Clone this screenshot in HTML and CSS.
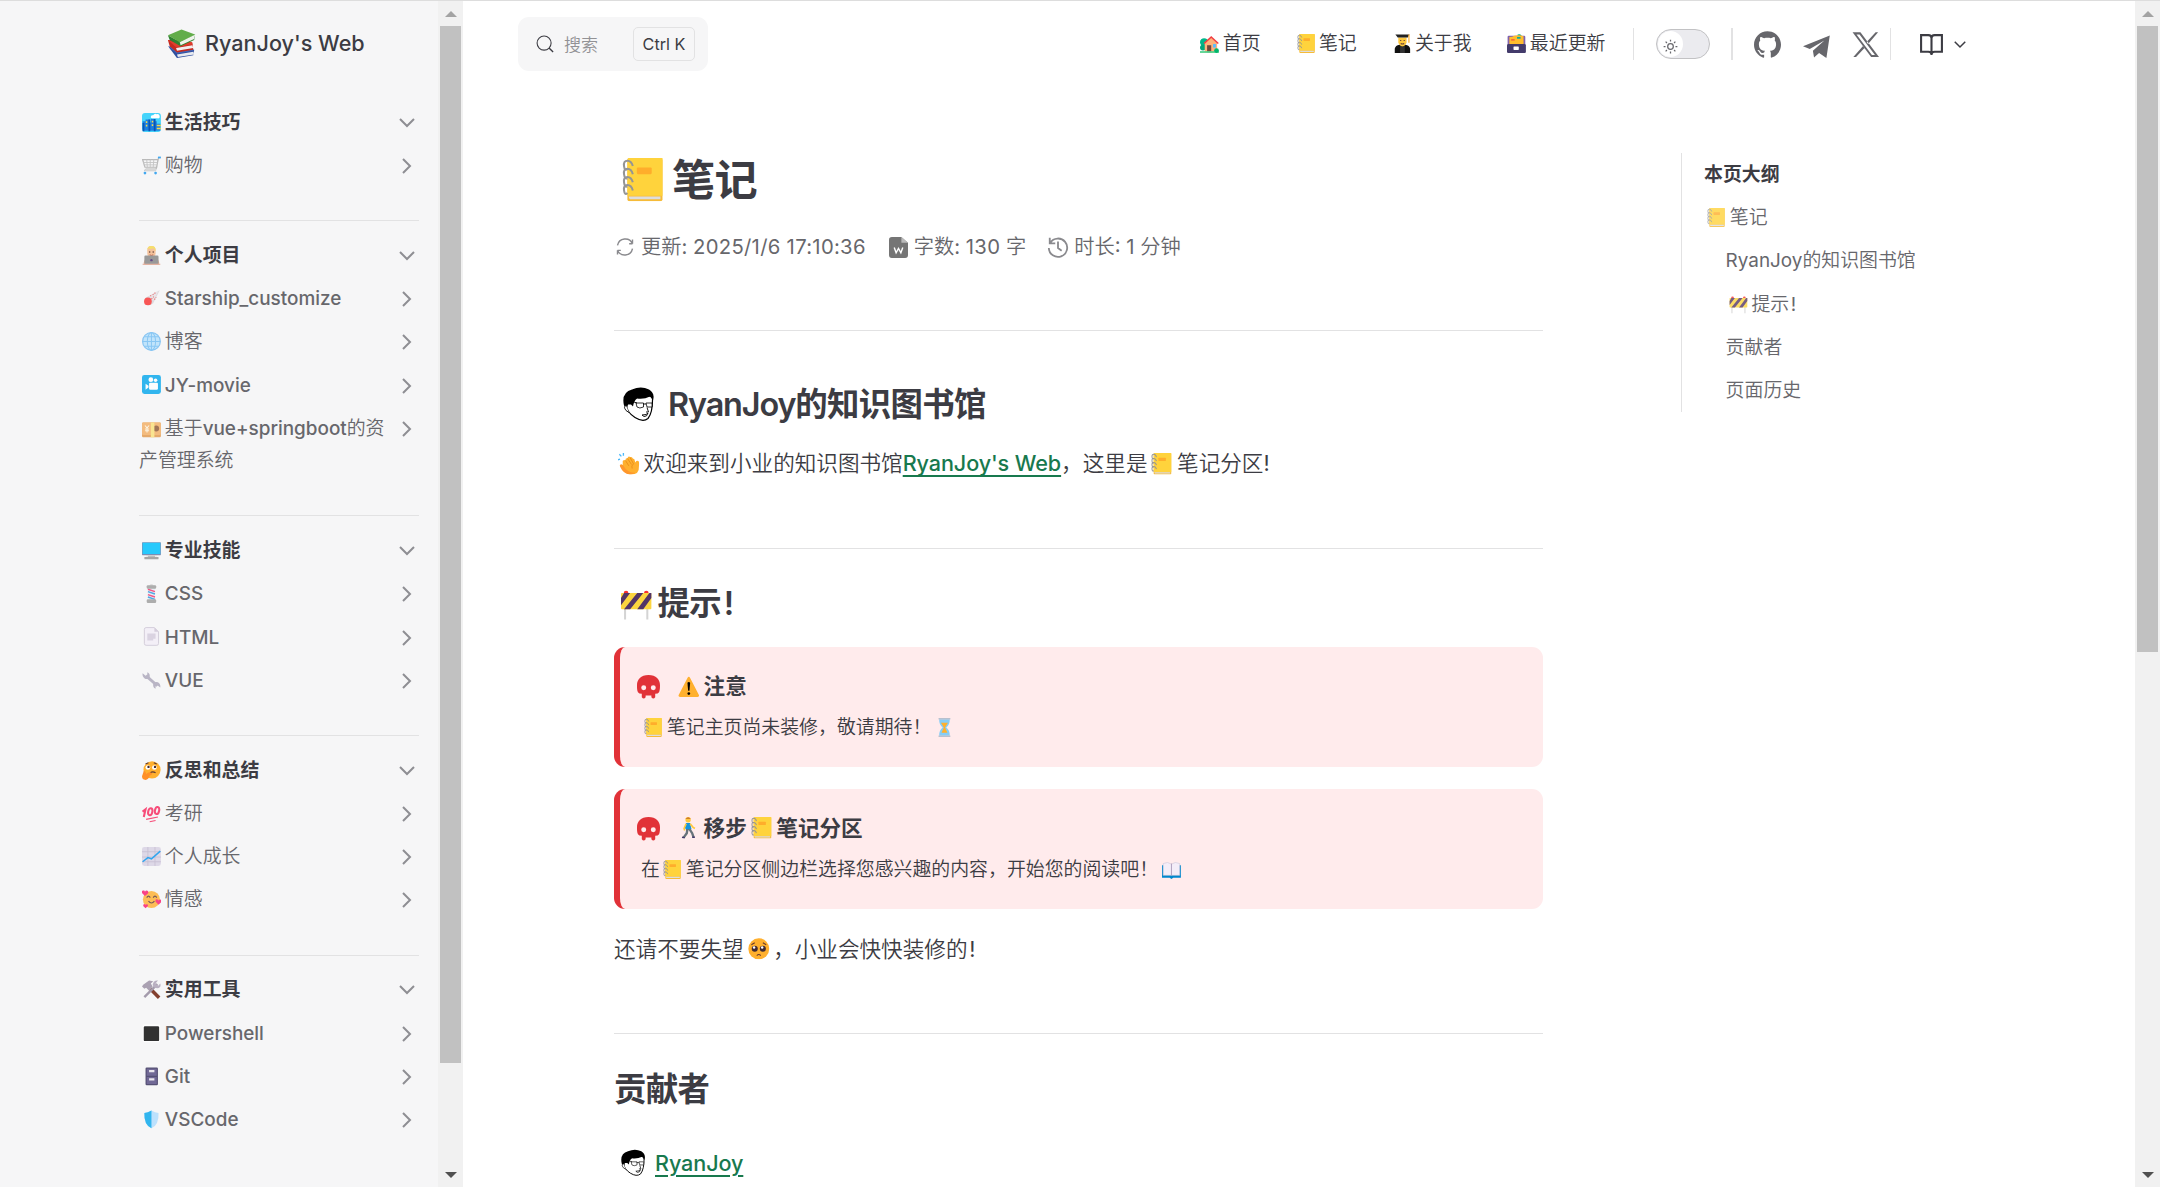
FILE: index.html
```html
<!DOCTYPE html>
<html lang="zh-CN">
<head>
<meta charset="utf-8">
<title>笔记 | RyanJoy's Web</title>
<link rel="stylesheet" href="styles.css">
</head>
<body>
<svg class="sprite" aria-hidden="true">
  <symbol id="books" viewBox="0 0 32 32">
    <path d="M2 20l9 12 18-3 1-6-18-5z" fill="#2f4f9f"/><path d="M11 28l18-3 1 3-18 3z" fill="#e8eaf0"/><path d="M1 19l10 8 19-3-8-3z" fill="#4266b8"/>
    <path d="M1 12l2 7 8 7 18-3-1-8-12-3z" fill="#c52a20"/><path d="M10 21l18-3 1 3-18 3z" fill="#f3eeee"/><path d="M1 12l9 8 18-3-1-3-14 2z" fill="#e03d2d"/>
    <path d="M1 7l13 7 17-8-1 6-15 7L3 12z" fill="#2f8232"/><path d="M14 14l17-8-1 5-15 7z" fill="#eef3ea"/><path d="M1 7L16 .5 31 6l-17 8.500z" fill="#62ad4a"/>
  </symbol>
  <symbol id="city" viewBox="0 0 32 32"><rect width="32" height="32" rx="5" fill="#45d4fb"/><path d="M15 6q1-3 4-2 2-4 6-2 4-1 5 3 1 5-4 4h-9q-3 0-2-3z" fill="#fff"/><path d="M1 14h5v-3h7v5h2v-6h7v4h3v4h6v12H3l-2-3z" fill="#1c7fe0"/><path d="M1 17h3v14H1zM11 11h3v20h-3zM20 10h3v21h-3z" fill="#0a55b5"/><path d="M6.500 14H9v3H6.500zm0 6H9v3H6.500zm10-7H19v3h-2.500zm0 6H19v3h-2.500zM25 20h7v2.500h-7zm0 5h7v2.500h-7z" fill="#f7d84b"/></symbol>
  <symbol id="cart" viewBox="0 0 32 32"><path d="M31 3h-3l-4 19H6M1 6h26l-2 13H5z" fill="none" stroke="#aaa" stroke-width="2"/><path d="M2 11h24M3 15h22M8 6l1 13M14 6v13M20 6l-1 13M6 22l-2 3h20" fill="none" stroke="#b8b8b8" stroke-width="1.500"/><circle cx="5" cy="29" r="2.300" fill="#1695ef"/><circle cx="23" cy="29" r="2.300" fill="#1695ef"/><path d="M27 1h5v3h-5z" fill="#1695ef"/></symbol>
  <symbol id="coder" viewBox="0 0 32 32"><path d="M3 32v-4q1-7 8-8h10q7 1 8 8v4z" fill="#e9ae8d"/><path d="M9 7q0-7 7-7t7 7v6q-1 7-7 7t-7-7z" fill="#f4c29c"/><path d="M9 9q-1-9 7-9t7 9q-2-4-4-5-5 2-8 0-2 2-2 5z" fill="#f5df6c"/><circle cx="13" cy="10" r="1.300" fill="#60403a"/><circle cx="19" cy="10" r="1.300" fill="#60403a"/><path d="M13 15q3 2 6 0" stroke="#b6513f" stroke-width="1.500" fill="none"/><rect x="4" y="16" width="24" height="15" rx="2" fill="#999"/><circle cx="16" cy="24" r="2" fill="#674c86"/><path d="M1 30h30v2H1z" fill="#e3b3a3"/></symbol>
  <symbol id="comet" viewBox="0 0 32 32"><path d="M30 2L6 15q-4 7 1 11 6 4 12-2z" fill="#d8d3d8"/><path d="M28 3L12 12l7 8z" fill="#e7e3e7"/><path d="M14 12l3-2m-1 7l4-4m1 5l3-4m-6-4l5-4" stroke="#e45a5a" stroke-width="2" stroke-dasharray="2 2"/><circle cx="10" cy="21" r="6.500" fill="#f92f2f"/></symbol>
  <symbol id="globe" viewBox="0 0 32 32"><circle cx="16" cy="16" r="15" fill="#b4e0fc" stroke="#6bb8f2" stroke-width="2"/><g fill="none" stroke="#6fbcf3" stroke-width="1.700"><ellipse cx="16" cy="16" rx="7" ry="15"/><path d="M16 1v30M1 16h30M4 8h24M4 24h24"/></g></symbol>
  <symbol id="cinema" viewBox="0 0 32 32"><rect width="32" height="32" rx="4" fill="#00a6ed"/><circle cx="15" cy="8" r="4" fill="#fff"/><circle cx="23" cy="9" r="3" fill="#fff"/><rect x="12" y="13" width="15" height="12" rx="2" fill="#fff"/><path d="M6 15l5 3v3l-5 4z" fill="#fff"/></symbol>
  <symbol id="yen" viewBox="0 0 32 32"><rect x="0" y="6" width="32" height="25" rx="2" fill="#e19747"/><rect y="6" width="32" height="21" rx="2" fill="#f3ad61"/><circle cx="24" cy="16" r="5" fill="#8c542e"/><path d="M15 6h6v25h-6z" fill="#fae077"/><path d="M5 11l3.500 4 3.500-4M8.500 15v8M5 17h7M5 20h7" stroke="#fff3da" stroke-width="1.800" fill="none"/></symbol>
  <symbol id="desktop" viewBox="0 0 32 32"><path d="M10 23h12v4H10z" fill="#aaa"/><rect width="32" height="22" y="2" rx="1" fill="#7b8eb5"/><rect x="1" y="3" width="30" height="19" fill="#26c9fc"/><rect x="4" y="27" width="24" height="4" rx="1" fill="#a5a5a5"/><path d="M7 24h18v2H7z" fill="#d6d6d6"/></symbol>
  <symbol id="barber" viewBox="0 0 32 32"><path d="M12 3q4-5 8 0z" fill="#ccc"/><rect x="10" y="6" width="12" height="20" fill="#e6edf5"/><path d="M10 9l12 4M10 18l12 4" stroke="#f0326b" stroke-width="2.500"/><path d="M10 13l12 4M10 22l12 4" stroke="#2795df" stroke-width="2.500"/><rect x="8" y="2" width="16" height="6" rx="2" fill="#9b9b9b"/><rect x="8" y="26" width="16" height="6" rx="2" fill="#9b9b9b"/></symbol>
  <symbol id="page" viewBox="0 0 32 32"><path d="M7 1h14l7 7v20q0 3-3 3H7q-3 0-3-3V4q0-3 3-3z" fill="#f3eef8" stroke="#c7bfd0" stroke-width="1.500"/><path d="M21 1v7h7z" fill="#cdc4d6"/><path d="M9 11h14v9h-4v3H9z" fill="#d4cbdc"/></symbol>
  <symbol id="wrench" viewBox="0 0 32 32"><path d="M8 9l18 16" stroke="#aaa5b9" stroke-width="5"/><path d="M1 4l5 4 3-2V2q5 2 4 8-3 5-8 3-5-3-4-9zM31 28l-5-4-3 2v4q-5-2-4-8 3-5 8-3 5 3 4 9z" fill="#aaa5b9"/></symbol>
  <symbol id="thinking" viewBox="0 0 32 32"><circle cx="17" cy="15" r="14.500" fill="#ffb02e"/><circle cx="10" cy="11" r="4" fill="#fff"/><circle cx="21" cy="11" r="4" fill="#fff"/><circle cx="11" cy="10" r="2" fill="#402a32"/><circle cx="22" cy="10" r="2" fill="#402a32"/><path d="M6 5l5-2m9 0l5 2M14 20q4-3 9 0" stroke="#5e3a32" stroke-width="2" fill="none"/><path d="M3 17q3-1 4 5 5-5 9-2 4 2-3 5-2 7-7 7-6 0-6-6z" fill="#ff9027"/></symbol>
  <symbol id="hundred" viewBox="0 0 32 32"><g fill="none" stroke="#f8245b" stroke-width="3.500"><path d="M1 13l5-4-3 13"/><ellipse cx="14" cy="13" rx="3.500" ry="6" transform="rotate(12 14 13)"/><ellipse cx="25.500" cy="11" rx="3.500" ry="6" transform="rotate(12 25.500 11)"/><path d="M7 26l20-4M13 30l10-2" stroke-width="2"/></g></symbol>
  <symbol id="chart" viewBox="0 0 32 32"><rect width="32" height="32" rx="4" fill="#d8d1e4"/><path d="M0 8h32M0 17h32M0 25h32M10 0v32M22 0v32" stroke="#bcb3cb" stroke-width="1.500"/><path d="M1 25l9-7 6 2L31 7" stroke="#0092ed" stroke-width="2.500" fill="none"/></symbol>
  <symbol id="love" viewBox="0 0 32 32"><circle cx="16" cy="16" r="14.500" fill="#ffb02e"/><path d="M8 13q3-5 6 0m5 0q3-5 6 0M11 19q5 6 10 0" fill="none" stroke="#523037" stroke-width="2"/><path d="M5 10L0 5q-1-5 3-4 2 0 2 2 1-2 3-2 4 1 2 5z" fill="#fa176c"/><path d="M28 25l-5-5q-1-5 3-4 2 0 2 2 1-2 3-2 3 1 1 5zM6 31l-4-4q0-4 3-3l1 1 2-1q3 0 2 3z" fill="#fa176c"/></symbol>
  <symbol id="tools" viewBox="0 0 32 32"><path d="M14 15l15 15" stroke="#83402f" stroke-width="6"/><path d="M4 29L26 7" stroke="#a49bac" stroke-width="4"/><path d="M20 3q4-3 7-2l-4 5 4 4 4-4q2 7-5 8-6 0-8-6z" fill="#b9b0c1"/><path d="M2 8l10-7 7 1-4 4 3 5-6 7-5-5-3 2-4-4z" fill="#aaa1b2"/></symbol>
  <symbol id="black" viewBox="0 0 32 32"><rect x="1" y="1" width="30" height="30" rx="2" fill="#fff"/><rect x="3" y="4" width="26" height="25" rx="2" fill="#000"/></symbol>
  <symbol id="cabinet" viewBox="0 0 32 32"><rect x="6" y="1" width="21" height="30" rx="2" fill="#2f2855"/><path d="M8 3h17v12H8zm0 14h17v12H8z" fill="#51477f"/><path d="M12 5h9v4h-9zm0 14h9v4h-9z" fill="#e8e4ec"/></symbol>
  <symbol id="shield" viewBox="0 0 32 32"><path d="M16 1q6 4 12 4 1 20-12 26Q3 25 4 5q6 0 12-4" fill="#aedcff"/><path d="M16 1v30Q3 25 4 5q6 0 12-4" fill="#00a6ed"/></symbol>
  <symbol id="house" viewBox="0 0 32 32"><circle cx="7" cy="14" r="7" fill="#00b68a"/><circle cx="5" cy="23" r="5" fill="#00a77c"/><path d="M8 15l11-10 10 10v16H8z" fill="#ffb37b"/><path d="M7 16L19 5l12 11" fill="none" stroke="#f13d42" stroke-width="2.600"/><path d="M12 19h7v12h-7z" fill="#70483d"/><path d="M22 17h5v6h-5z" fill="#59bdff"/><path d="M0 29h32v3H0z" fill="#52d18b"/><circle cx="28" cy="28" r="4" fill="#00b66d"/></symbol>
  <symbol id="note" viewBox="0 0 32 32"><rect x="4" y="0" width="26" height="32" rx="1.500" fill="#f6bb38"/><path d="M5.500 0H30v28H4V1.500Q4 0 5.500 0z" fill="#ffd33c"/><path d="M5 28.500h23.500v2H6q-1-.5-1-2z" fill="#ddd"/><rect x="11" y="7" width="11" height="5" rx=".8" fill="#ffad2b"/><path d="M8 6Q7 2 4 2T1.500 6 4 8M8 12Q7 8 4 8t-2.500 4T4 15M8 18q-1-4-4-4t-2.500 4T4 21M8 24q-1-4-4-4t-2.500 4T4 26" fill="none" stroke="#959595" stroke-width="1.500"/></symbol>
  <symbol id="grad" viewBox="0 0 32 32"><path d="M3 32v-7q1-6 8-7h10q7 1 8 7v7z" fill="#111"/><path d="M12 32V19l4 3 4-3v13z" fill="#333"/><path d="M9 6h14v8q-1 6-7 7-6-1-7-7z" fill="#ffc83d"/><path d="M4 1l24 0-3 5H8z" fill="#222"/><path d="M27 1v14" stroke="#ffb02e" stroke-width="2"/><path d="M12 11h2m4 0h2m-7 5q3 2 6 0" stroke="#65413a" stroke-width="1.800" fill="none"/></symbol>
  <symbol id="files" viewBox="0 0 32 32"><path d="M18 1q6-2 7 3h-7z" fill="#00b87a"/><rect x="1" y="3" width="30" height="15" rx="2" fill="#8062ad"/><path d="M4 5q6 0 8-2 10-2 16 1v13H4z" fill="#ffbd2d"/><path d="M17 5h6v3h-6z" fill="#09aba0"/><path d="M7 9h6v2H7z" fill="#f14a3c"/><rect y="17" width="32" height="15" rx="2" fill="#433b6b"/><rect x="11" y="21" width="9" height="6" rx="1" fill="#fff"/></symbol>
  <symbol id="clap" viewBox="0 0 32 32"><path d="M3 9l-3 1m5-5L2 2m6 2V0" stroke="#4bb9fa" stroke-width="2"/><path d="M7 12q2-3 4-1 0-4 3-3 1-4 4-2 3-1 4 2 3 0 3 4l1 2q1-4 4-2 2 1 1 8 1 12-12 12Q9 31 4 20q0-3 3-2z" fill="#ffb02e"/><path d="M11 11l5 8M14 8l6 9M18 7l5 9q-4 3-2 7" stroke="#e88d16" stroke-width="1.300" fill="none"/><path d="M4 17q-2 0-1 3 5 11 14 12 6 0 9-3-12 1-18-10-2-3-4-2z" fill="#ff972c"/></symbol>
  <symbol id="barrier" viewBox="0 0 32 32"><path d="M5 20v11M27 20v11" stroke="#d4d4d4" stroke-width="2"/><circle cx="6" cy="5" r="2.300" fill="#f8312f"/><circle cx="26" cy="5" r="2.300" fill="#f8312f"/><rect x="1" width="30" y="5" height="16" rx="1" fill="#fcd53f"/><path d="M4 5h6L1 17v-7zM17 5h6L10 21H4zM29 5h2v5l-8 11h-6z" fill="#533566"/></symbol>
  <symbol id="warn" viewBox="0 0 32 32"><path d="M14 3q2-4 4 0l13 25q1 3-2 3H3q-3 0-2-3z" fill="#ffb02e"/><path d="M14 10q2-2 4 0l-1 12h-2z"/><circle cx="16" cy="26" r="2"/></symbol>
  <symbol id="hourglass" viewBox="0 0 32 32"><path d="M7 2h18q0 10-6 14 6 4 6 14H7q0-10 6-14Q7 12 7 2z" fill="#86cdf7"/><path d="M10 8h12l-5 8 4 9H11l4-9z" fill="#ffb02e"/><path d="M6 1h20M6 31h20" stroke="#b8c0ce" stroke-width="3"/></symbol>
  <symbol id="walk" viewBox="0 0 32 32"><circle cx="15" cy="4" r="4" fill="#ffc83d"/><path d="M11 3q4-5 8 0z" fill="#ce7c2d"/><path d="M12 9h6l2 9-7 2-3-4z" fill="#1595df"/><path d="M12 10l-3 7 1 3M18 10l4 5 3 2" stroke="#ffc83d" stroke-width="2.500" fill="none"/><path d="M14 18l-1 6-5 7M17 18l4 6 2 6" stroke="#68737a" stroke-width="3.500" fill="none"/><path d="M6 30l4 1m11-1h4" stroke="#433b6b" stroke-width="2.500"/></symbol>
  <symbol id="book" viewBox="0 0 32 32"><path d="M0 9h32v21H19l-3 2-3-2H0z" fill="#0088ce"/><path d="M2 6q8-4 14 1 6-5 14-1v20H2z" fill="#f4edf8" stroke="#cdc5d8"/><path d="M16 6v20" stroke="#a897b7" stroke-width="1.500"/></symbol>
  <symbol id="plead" viewBox="0 0 32 32"><circle cx="16" cy="16" r="15.500" fill="#ffb02e"/><circle cx="10" cy="16" r="4.500" fill="#402a32"/><circle cx="22" cy="16" r="4.500" fill="#402a32"/><circle cx="9" cy="14" r="1.800" fill="#fff"/><circle cx="21" cy="14" r="1.800" fill="#fff"/><path d="M5 10l5-3m12 0l5 3M13 26q3-3 6 0" stroke="#6a392e" stroke-width="1.500" fill="none"/></symbol>
  <symbol id="face" viewBox="0 0 32 34"><path d="M3 17q1 8 9 13 8 5 13 1 5-6 4.500-22L21 8 8 12z" fill="#fff" stroke="#000" stroke-width="1.200"/><path d="M1 18Q-2 5 9 2q9-4 17 0 5 3 4.500 8l-.5 3q-2-3-3-4-6 3-13 2-3 2-4 8l-2-2-3 0-1 4z"/><path d="M3 18q-3 1 0 5l3 2" fill="#fff" stroke="#000" stroke-width=".9"/><path d="M13 15.500h7.500v4q-4 2-6.500 0zm10 0h6v4h-5z" fill="#fff" stroke="#000" stroke-width=".8"/><path d="M11 14.500l3 1M20 16.500h3M24 20l1.500 4.500H23M19 27.500q5 0 6-2-1 4-4 3.500z" fill="none" stroke="#000" stroke-width=".9"/></symbol>
  <symbol id="skull" viewBox="0 0 24 28" preserveAspectRatio="none"><path d="M12 0C4 0 0 5 0 12c0 3 0 6 1 8q1 2 4 2v4q2 3 4 0v-2h6v2q2 3 4 0v-4q3 0 4-2 1-2 1-8C24 5 20 0 12 0zM7 12a2.600 2.900 0 1 1 0 5.800A2.600 2.900 0 0 1 7 12zm10 0a2.600 2.900 0 1 1 0 5.800A2.600 2.900 0 0 1 17 12z" fill="#e13238" fill-rule="evenodd"/></symbol>
  <symbol id="right" viewBox="0 0 24 24"><path d="M9 5l7 7-7 7" fill="none" stroke="currentColor" stroke-width="2"/></symbol>
  <symbol id="down" viewBox="0 0 24 24"><path d="M5 9l7 7 7-7" fill="none" stroke="currentColor" stroke-width="2"/></symbol>
</svg>

<div class="app">
  <aside class="sidebar">
    <div class="brand"><svg class="logo"><use href="#books"/></svg>RyanJoy's Web</div>
    <nav>
      <section class="group">
        <div class="row head"><span><svg class="emoji"><use href="#city"/></svg>生活技巧</span><svg class="caret"><use href="#down"/></svg></div>
        <div class="row"><span><svg class="emoji"><use href="#cart"/></svg>购物</span><svg class="caret"><use href="#right"/></svg></div>
      </section>
      <section class="group">
        <div class="row head"><span><svg class="emoji"><use href="#coder"/></svg>个人项目</span><svg class="caret"><use href="#down"/></svg></div>
        <div class="row"><span><svg class="emoji"><use href="#comet"/></svg>Starship_customize</span><svg class="caret"><use href="#right"/></svg></div>
        <div class="row"><span><svg class="emoji"><use href="#globe"/></svg>博客</span><svg class="caret"><use href="#right"/></svg></div>
        <div class="row"><span><svg class="emoji"><use href="#cinema"/></svg>JY-movie</span><svg class="caret"><use href="#right"/></svg></div>
        <div class="row"><span><svg class="emoji"><use href="#yen"/></svg>基于vue+springboot的资产管理系统</span><svg class="caret"><use href="#right"/></svg></div>
      </section>
      <section class="group">
        <div class="row head"><span><svg class="emoji"><use href="#desktop"/></svg>专业技能</span><svg class="caret"><use href="#down"/></svg></div>
        <div class="row"><span><svg class="emoji"><use href="#barber"/></svg>CSS</span><svg class="caret"><use href="#right"/></svg></div>
        <div class="row"><span><svg class="emoji"><use href="#page"/></svg>HTML</span><svg class="caret"><use href="#right"/></svg></div>
        <div class="row"><span><svg class="emoji"><use href="#wrench"/></svg>VUE</span><svg class="caret"><use href="#right"/></svg></div>
      </section>
      <section class="group">
        <div class="row head"><span><svg class="emoji"><use href="#thinking"/></svg>反思和总结</span><svg class="caret"><use href="#down"/></svg></div>
        <div class="row"><span><svg class="emoji"><use href="#hundred"/></svg>考研</span><svg class="caret"><use href="#right"/></svg></div>
        <div class="row"><span><svg class="emoji"><use href="#chart"/></svg>个人成长</span><svg class="caret"><use href="#right"/></svg></div>
        <div class="row"><span><svg class="emoji"><use href="#love"/></svg>情感</span><svg class="caret"><use href="#right"/></svg></div>
      </section>
      <section class="group">
        <div class="row head"><span><svg class="emoji"><use href="#tools"/></svg>实用工具</span><svg class="caret"><use href="#down"/></svg></div>
        <div class="row"><span><svg class="emoji"><use href="#black"/></svg>Powershell</span><svg class="caret"><use href="#right"/></svg></div>
        <div class="row"><span><svg class="emoji"><use href="#cabinet"/></svg>Git</span><svg class="caret"><use href="#right"/></svg></div>
        <div class="row"><span><svg class="emoji"><use href="#shield"/></svg>VSCode</span><svg class="caret"><use href="#right"/></svg></div>
      </section>
    </nav>
  </aside>
  <div class="scroll side-scroll"><i class="arrow up"></i><i class="thumb"></i><i class="arrow dn"></i></div>

  <div class="main">
    <header class="topbar">
      <div class="search">
        <svg class="mag" viewBox="0 0 20 20"><circle cx="9" cy="9" r="7.800" fill="none" stroke="currentColor" stroke-width="1.200"/><path d="M14.500 14.500l4.500 4.500" stroke="currentColor" stroke-width="1.500"/></svg>
        <span class="hint">搜索</span><kbd>Ctrl K</kbd>
      </div>
      <nav class="menu">
        <a><svg class="emoji"><use href="#house"/></svg>首页</a>
        <a><svg class="emoji"><use href="#note"/></svg>笔记</a>
        <a><svg class="emoji"><use href="#grad"/></svg>关于我</a>
        <a><svg class="emoji"><use href="#files"/></svg>最近更新</a>
      </nav>
      <i class="sep s1"></i>
      <span class="switch"><span class="knob"><svg viewBox="0 0 24 24"><circle cx="12" cy="12" r="4.500" fill="none" stroke="currentColor" stroke-width="2"/><path d="M12 1v3M12 20v3M1 12h3M20 12h3M4.200 4.200l2.100 2.100M17.700 17.700l2.100 2.100M4.200 19.800l2.100-2.100M17.700 6.300l2.100-2.100" stroke="currentColor" stroke-width="2"/></svg></span></span>
      <i class="sep s2"></i>
      <div class="social">
        <svg viewBox="0 0 24 24"><path d="M12 .297c-6.630 0-12 5.373-12 12 0 5.303 3.438 9.800 8.205 11.385.6.113.82-.258.82-.577 0-.285-.01-1.040-.015-2.040-3.338.724-4.042-1.610-4.042-1.610C4.422 18.070 3.633 17.700 3.633 17.700c-1.087-.744.084-.729.084-.729 1.205.084 1.838 1.236 1.838 1.236 1.070 1.835 2.809 1.305 3.495.998.108-.776.417-1.305.760-1.605-2.665-.3-5.466-1.332-5.466-5.930 0-1.310.465-2.380 1.235-3.220-.135-.303-.540-1.523.105-3.176 0 0 1.005-.322 3.300 1.230.960-.267 1.980-.399 3-.405 1.020.006 2.040.138 3 .405 2.280-1.552 3.285-1.230 3.285-1.230.645 1.653.240 2.873.120 3.176.765.840 1.230 1.910 1.230 3.220 0 4.610-2.805 5.625-5.475 5.920.420.360.810 1.096.810 2.220 0 1.606-.015 2.896-.015 3.286 0 .315.210.690.825.570C20.565 22.092 24 17.592 24 12.297c0-6.627-5.373-12-12-12" fill="currentColor"/></svg>
        <svg viewBox="0 0 24 24"><path d="M0 13.500L23.800 4 20.800 24l-6.500-4.500-4.500 4-1-6L19 8.500 6 16z" fill="currentColor"/></svg>
        <svg viewBox="0 0 24 24"><path d="M.5 1.200h7L24 23.200h-7zM4 3l13.700 18.400h2.700L6.700 3zM21 1.200h2.200L14.300 11.500l-1.300-1.700zM9.800 13.300l1.300 1.800-7.500 8.100H1.200z" fill="currentColor" fill-rule="evenodd"/></svg>
      </div>
      <i class="sep s3"></i>
      <div class="reader">
        <svg viewBox="0 0 24 24"><path d="M12 5v17M2 3h7q3 0 3 3 0-3 3-3h7v16h-7q-3 0-3 2.500 0-2.500-3-2.500H2z" fill="none" stroke="currentColor" stroke-width="2"/></svg>
        <svg class="mini"><use href="#down"/></svg>
      </div>
    </header>

    <div class="columns">
      <main class="doc">
        <h1><svg class="emoji"><use href="#note"/></svg>笔记</h1>
        <div class="meta">
          <span><svg viewBox="0 0 24 24"><path d="M3 10a9.500 9.500 0 0 1 18-2v-5M21 14a9.500 9.500 0 0 1-18 2v5M21 8h-4M3 16h4" fill="none" stroke="currentColor" stroke-width="1.700"/></svg>更新: <b>2025/1/6 17:10:36</b></span>
          <span><svg class="word" viewBox="0 0 20 22"><path d="M3 0h10l7 6v13q0 3-3 3H3q-3 0-3-3V3q0-3 3-3z" fill="currentColor"/><path d="M13 0v6h7z" fill="#bbb"/><path d="M5.500 11l2 5.500L10 12l2.500 4.500 2-5.500" fill="none" stroke="#fff" stroke-width="1.500"/></svg>字数: <b>130</b> 字</span>
          <span><svg class="hist" viewBox="0 0 24 24"><path d="M3 2v6h6M3.500 7.500A10 10 0 1 1 2 13M12 6v7l4 3" fill="none" stroke="currentColor" stroke-width="2"/></svg>时长: 1 分钟</span>
        </div>
        <h2 class="intro"><svg class="face"><use href="#face"/></svg><span class="latin">RyanJoy</span>的知识图书馆</h2>
        <p><svg class="emoji"><use href="#clap"/></svg>欢迎来到小业的知识图书馆<a class="link">RyanJoy's Web</a>，这里是<svg class="emoji"><use href="#note"/></svg>笔记分区!</p>
        <h2><svg class="emoji"><use href="#barrier"/></svg>提示<span class="bang">!</span></h2>
        <div class="alert">
          <div class="title"><svg class="skull"><use href="#skull"/></svg><svg class="emoji"><use href="#warn"/></svg>注意</div>
          <div class="body"><svg class="emoji"><use href="#note"/></svg>笔记主页尚未装修，敬请期待！<svg class="emoji"><use href="#hourglass"/></svg></div>
        </div>
        <div class="alert">
          <div class="title"><svg class="skull"><use href="#skull"/></svg><svg class="emoji"><use href="#walk"/></svg>移步<svg class="emoji"><use href="#note"/></svg>笔记分区</div>
          <div class="body">在<svg class="emoji"><use href="#note"/></svg>笔记分区侧边栏选择您感兴趣的内容，开始您的阅读吧！<svg class="emoji"><use href="#book"/></svg></div>
        </div>
        <p class="closing">还请不要失望<svg class="emoji"><use href="#plead"/></svg>，小业会快快装修的<span class="bang">!</span></p>
        <h2>贡献者</h2>
        <div class="person"><svg><use href="#face"/></svg><a class="link">RyanJoy</a></div>
      </main>
      <aside class="outline">
        <div class="label">本页大纲</div>
        <div><svg class="emoji"><use href="#note"/></svg>笔记</div>
        <div class="sub">RyanJoy的知识图书馆</div>
        <div class="sub"><svg class="emoji"><use href="#barrier"/></svg>提示<span class="bang">!</span></div>
        <div class="sub">贡献者</div>
        <div class="sub">页面历史</div>
      </aside>
    </div>
  </div>
  <div class="scroll page-scroll"><i class="arrow up"></i><i class="thumb"></i><i class="arrow dn"></i></div>
</div>
</body>
</html>
```
FILE: styles.css
```css
* { box-sizing: border-box; }
html, body { margin: 0; height: 100%; overflow: hidden; }
body {
  font-family: Inter, "Noto Sans CJK SC DemiLight", "Noto Sans CJK SC Light", "Noto Sans CJK SC", sans-serif;
  font-size: 21.6px;
  color: #3c3c43;
  background: #fff;
}
.sprite { position: absolute; width: 0; height: 0; }
svg { flex: none; overflow: visible; }
h1, h2, p { margin: 0; }

.app { display: flex; height: 1187px; border-top: 1px solid #ddd; }

.emoji { width: 1em; height: 1em; margin: 0 .185em; vertical-align: -.15em; }
.bang { margin-left: .08em; }

/* Sidebar */
.sidebar { width: 438px; padding: 0 19px 0 139px; background: #f6f6f7; flex: none; overflow: hidden; }
.brand { display: flex; align-items: center; height: 86.400px; padding: 0 0 2px 28px; font-weight: 550; white-space: nowrap; }
.logo { width: 29px; height: 29px; margin-right: 9px; }
.group { padding: 13.500px 0 32.400px; border-top: 1px solid #e2e2e3; font-size: 18.900px; }
.group:first-child { border-top-color: transparent; padding-top: 12.900px; }
.row { display: flex; justify-content: space-between; padding: 5.400px 0; line-height: 32.400px; font-weight: 500; color: #67676c; }
.row .emoji { opacity: .8; }
.row span { width: 248px; word-break: break-all; }
.head { font-family: Inter, "Noto Sans CJK SC", sans-serif; font-weight: 700; color: #3c3c43; }
.row.head .emoji { opacity: 1; }
.caret { width: 24px; height: 24px; margin: 4px 1px 0 0; color: #8e8e93; }
.head .caret { margin: 3px 0 0; }

/* Scrollbars */
.scroll { width: 25px; flex: none; display: flex; flex-direction: column; align-items: center; background: #f1f1f1; }
.thumb { width: 21px; background: #c1c1c1; }
.side-scroll .thumb { height: 1037px; }
.page-scroll .thumb { height: 626px; }
.arrow { border: 6px solid transparent; height: 6px; }
.up { border-bottom-color: #a3a3a3; border-top: 0; margin: 10px 0 9px; }
.dn { border-top-color: #505050; border-bottom: 0; margin: auto 0 9px; }

/* Top bar */
.main { flex: 1; min-width: 0; }
.topbar { display: flex; align-items: center; height: 86px; padding-left: 55px; }
.search { display: flex; align-items: center; width: 190px; height: 54px; padding: 0 13px 0 18px; background: #f6f6f7; border-radius: 11px; }
.mag { width: 18px; height: 18px; }
.hint { margin-left: 10px; padding-bottom: 2px; font-size: 17px; color: #929295; }
kbd { margin-left: auto; width: 62px; height: 34px; border: 1px solid #e2e2e3; border-radius: 5px; font: 400 16.200px/32px Inter, sans-serif; text-align: center; white-space: nowrap; }
.menu { display: flex; gap: 32.400px; margin-left: 489px; padding-bottom: 5px; font-size: 18.900px; white-space: nowrap; }
.sep { width: 1px; height: 32px; background: #e2e2e3; }
.s1 { margin: 0 22px 0 28px; }
.s2 { width: 2px; margin: 0 21px 0 21px; }
.s3 { margin: 0 28px 0 11px; }
.switch { width: 54px; height: 30px; border: 1px solid #c2c2c4; border-radius: 15px; background: #ebebef; display: flex; padding: 1px; }
.knob { width: 25px; height: 26px; border-radius: 50%; background: #fff; display: grid; place-items: center; color: #67676c; }
.knob svg { width: 15px; height: 15px; margin-top: 4px; }
.social { display: flex; gap: 21.600px; color: #67676c; }
.social svg { width: 27px; height: 27px; }
.reader { display: flex; align-items: center; gap: 7px; }
.reader svg { width: 25px; height: 25px; }
.reader .mini { width: 18px; height: 18px; }

/* Document */
.columns { display: flex; justify-content: space-between; padding: 66px 0 0 151px; }
.doc { width: 929px; }
h1, h2, .title, .label { font-family: Inter, "Noto Sans CJK SC", sans-serif; font-weight: 600; }
h1 { font-size: 43.200px; line-height: 54px; letter-spacing: -.02em; }
h1 .emoji { margin-right: .16em; vertical-align: -.13em; }
h2 { font-size: 32.400px; line-height: 43.200px; letter-spacing: -.02em; border-top: 1px solid #e2e2e3; margin-top: 64.800px; padding-top: 33.400px; }
h2 .emoji { margin-right: .16em; }
.intro { display: flex; align-items: center; margin-top: 68px; padding-top: 52px; }
.latin { font-weight: 580; letter-spacing: -.035em; }
.face { width: 32px; height: 35px; margin: 0 13px 0 9px; }
.meta { display: flex; margin-top: 25px; gap: 22px; font-size: 20.250px; line-height: 30px; color: #67676c; white-space: pre; }
.meta span { display: flex; align-items: center; }
.meta b { font-weight: 400; letter-spacing: .3px; }
.meta svg { width: 20px; height: 20px; margin: 0 6px 0 1px; color: #8a8a8e; }
.meta .word { width: 19px; height: 21px; color: #757575; }
.meta .hist { width: 22px; height: 22px; margin: 0 5px 0 -1px; }
p { line-height: 37.800px; margin-top: 19px; white-space: nowrap; }
.link { color: #18794e; font-weight: 450; letter-spacing: -.1px; text-decoration: underline; text-underline-offset: 4px; text-decoration-thickness: 2px; }
.alert { height: 120px; margin-top: 21.600px; padding: 23px 0 0 17px; border-left: 6px solid #e13238; border-radius: 11px; background: #ffebec; }
.title { line-height: 32.400px; font-weight: 700; }
.skull { width: 23px; height: 24px; margin-right: 14px; vertical-align: -5px; }
.body { margin: 9.600px 0 0 4px; font-size: 18.900px; line-height: 32.400px; }
.closing { margin-top: 22px; }
.person { display: flex; align-items: center; gap: 9px; margin: 38px 0 0 7px; }
.person svg { width: 25px; height: 28px; }

/* Outline */
.outline { width: 454px; height: 259px; padding-left: 22px; border-left: 1px solid #e2e2e3; font-size: 18.900px; line-height: 43.200px; color: #67676c; }
.outline .emoji { opacity: .8; }
.label { font-weight: 700; color: #3c3c43; }
.sub { padding-left: 21.600px; }
```
